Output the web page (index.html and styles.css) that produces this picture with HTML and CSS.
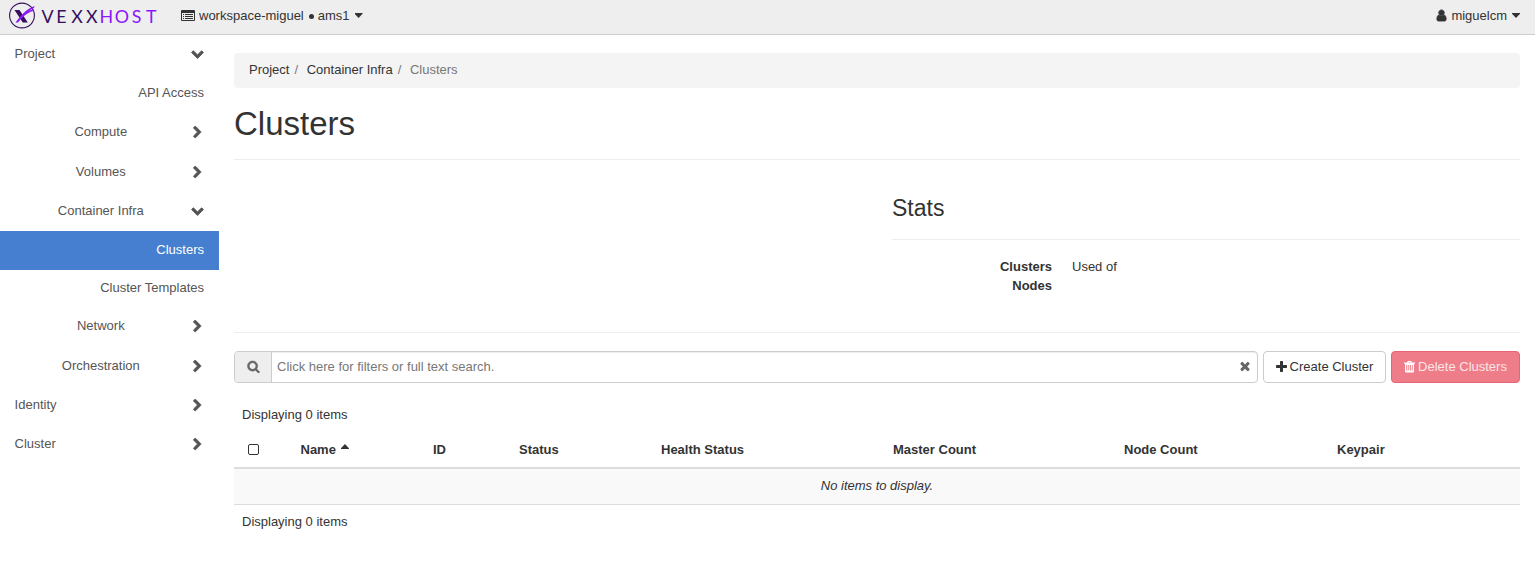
FILE: index.html
```html
<!DOCTYPE html>
<html lang="en">
<head>
<meta charset="utf-8">
<title>Clusters</title>
<link rel="stylesheet" href="styles.css">
</head>
<body>
<svg class="defs" aria-hidden="true">
  <symbol id="right" viewBox="0 0 1792 1792"><path d="M1363 877l-742 742q-19 19-45 19t-45-19l-166-166q-19-19-19-45t19-45l531-531-531-531q-19-19-19-45t19-45l166-166q19-19 45-19t45 19l742 742q19 19 19 45t-19 45z"/></symbol>
  <symbol id="down" viewBox="0 0 1792 1792"><path d="M1683 808l-742 741q-19 19-45 19t-45-19l-742-741q-19-19-19-45.500t19-45.500l166-165q19-19 45-19t45 19l531 531 531-531q19-19 45-19t45 19l166 165q19 19 19 45.500t-19 45.500z"/></symbol>
</svg>
<header class="navbar">
  <a class="brand"><svg width="150" height="30" viewBox="0 0 150 30">
    <circle cx="14" cy="15.500" r="12.400" fill="none" stroke="#35105e" stroke-width="1.100"/>
    <path d="M6.500 10h5l8.300 12.500h-5z" fill="#35105e"/>
    <path d="M7.500 22.500C12 17 17 9.500 26.500 6l-.5 1.800C18 12 14 18 10 22.500z" fill="#8b17fa"/>
    <path d="M13 18c4-4.500 8-7 13-8" stroke="#8b17fa" stroke-width="1.300" fill="none"/>
    <text class="wordmark" transform="translate(33.500 22.800) scale(1.050 1)"><tspan fill="#35105e" x="0 14 28.300 42.300">VEXX</tspan><tspan fill="#8b17fa" x="55.300 69.700 86 99.500">HOST</tspan></text>
  </svg></a>
  <a class="context"><svg class="list" width="14" height="11" viewBox="0 0 14 11"><path fill-rule="evenodd" d="M1 0h12q1 0 1 1v9q0 1-1 1H1q-1 0-1-1V1q0-1 1-1zM1 3v7h12V3z"/><path d="M2 4h1v1H2zM4 4h8v1H4zM2 6h1v1H2zM4 6h8v1H4zM2 8h1v1H2zM4 8h8v1H4z"/></svg><span>workspace-miguel</span><i class="dot"></i><span>ams1</span><i class="caret"></i></a>
  <a class="user"><svg width="13" height="13" viewBox="0 0 1792 1792"><path d="M1536 1399q0 109-62.500 187t-150.500 78h-854q-88 0-150.500-78t-62.500-187q0-85 8.500-160.500t31.500-152 58.500-131 94-89 134.500-34.500q131 128 313 128t313-128q76 0 134.500 34.500t94 89 58.500 131 31.500 152 8.500 160.500zm-256-887q0 159-112.500 271.500t-271.500 112.500-271.500-112.500-112.500-271.500 112.500-271.500 271.500-112.500 271.500 112.500 112.500 271.500z"/></svg><span>miguelcm</span><i class="caret"></i></a>
</header>
<div class="layout">
  <nav class="sidebar">
    <a class="item"><span>Project</span><svg class="open"><use href="#down"/></svg></a>
    <a class="item leaf">API Access</a>
    <a class="item group"><span>Compute</span><svg><use href="#right"/></svg></a>
    <a class="item group tall"><span>Volumes</span><svg><use href="#right"/></svg></a>
    <a class="item group"><span>Container Infra</span><svg class="open"><use href="#down"/></svg></a>
    <a class="item leaf active">Clusters</a>
    <a class="item leaf short">Cluster Templates</a>
    <a class="item group"><span>Network</span><svg><use href="#right"/></svg></a>
    <a class="item group tall"><span>Orchestration</span><svg><use href="#right"/></svg></a>
    <a class="item"><span>Identity</span><svg><use href="#right"/></svg></a>
    <a class="item"><span>Cluster</span><svg><use href="#right"/></svg></a>
  </nav>
  <main class="content">
    <ol class="breadcrumb"><li>Project</li><li>Container Infra</li><li class="current">Clusters</li></ol>
    <h1>Clusters</h1>
    <section class="stats">
      <h3>Stats</h3>
      <dl><dt>Clusters</dt><dd>Used of</dd><dt>Nodes</dt><dd></dd></dl>
    </section>
    <div class="toolbar">
      <div class="search">
        <span class="addon"><svg width="13" height="13" viewBox="0 0 1792 1792"><path d="M1216 832q0-185-131.500-316.500t-316.500-131.500-316.500 131.500-131.500 316.500 131.500 316.500 316.500 131.500 316.500-131.500 131.500-316.500zm512 832q0 52-38 90t-90 38q-54 0-90-38l-343-342q-179 124-399 124-143 0-273.500-55.500t-225-150-150-225-55.500-273.500 55.500-273.500 150-225 225-150 273.500-55.500 273.500 55.500 225 150 150 225 55.500 273.500q0 220-124 399l343 343q37 37 37 90z"/></svg></span>
        <input type="text" placeholder="Click here for filters or full text search.">
        <svg class="clear" width="14" height="14" viewBox="0 0 1792 1792"><path d="M1490 1322q0 40-28 68l-136 136q-28 28-68 28t-68-28l-294-294-294 294q-28 28-68 28t-68-28l-136-136q-28-28-28-68t28-68l294-294-294-294q-28-28-28-68t28-68l136-136q28-28 68-28t68 28l294 294 294-294q28-28 68-28t68 28l136 136q28 28 28 68t-28 68l-294 294 294 294q28 28 28 68z"/></svg>
      </div>
      <button class="btn create"><svg width="11" height="11" viewBox="192 128 1408 1408"><path d="M1600 736v192q0 40-28 68t-68 28h-416v416q0 40-28 68t-68 28h-192q-40 0-68-28t-28-68v-416h-416q-40 0-68-28t-28-68v-192q0-40 28-68t68-28h416v-416q0-40 28-68t68-28h192q40 0 68 28t28 68v416h416q40 0 68 28t28 68z"/></svg>Create Cluster</button>
      <button class="btn danger"><svg width="11" height="12" viewBox="0 0 11 12"><path fill-rule="evenodd" d="M0 1.500h3l.6-1Q3.800 0 4.300 0h2.400q.5 0 .7.500l.6 1h3v1.300h-1v7.700q0 1-1 1H2q-1 0-1-1V2.800H0zM4 1.500h3L6.500.9h-2zM2.300 4v5.500h1V4zM4.300 4v5.500h.900V4zM6 4v5.500h.900V4zM7.800 4v5.500h.900V4z"/></svg>Delete Clusters</button>
    </div>
    <table>
      <caption>Displaying 0 items</caption>
      <colgroup><col class="c-check"><col class="c-name"><col class="c-id"><col class="c-status"><col class="c-health"><col class="c-master"><col class="c-node"><col></colgroup>
      <thead><tr><th class="check"><i class="box"></i></th><th>Name<i class="sort"></i></th><th>ID</th><th>Status</th><th>Health Status</th><th>Master Count</th><th>Node Count</th><th>Keypair</th></tr></thead>
      <tbody><tr><td colspan="8">No items to display.</td></tr></tbody>
    </table>
    <p class="count">Displaying 0 items</p>
  </main>
</div>
</body>
</html>
```
FILE: styles.css
```css
* { box-sizing: border-box; }
body { margin: 0; font: 13px/19px "Liberation Sans", Arial, sans-serif; color: #333; background: #fff; overflow: hidden; }
svg { fill: currentColor; flex: none; }
.defs { display: none; }
.navbar { display: flex; align-items: flex-start; height: 35px; background: #eee; border-bottom: 1px solid #ccc; }
.brand { display: block; width: 173px; padding-left: 8px; }
.brand svg { display: block; overflow: visible; }
.wordmark { font: 400 17px Lato, sans-serif; }
.context, .user { display: flex; align-items: center; height: 31px; }
.context { padding-left: 8px; }
.context .list { margin-right: 4px; }
.dot { width: 5px; height: 5px; margin: 1px 4px 0 5px; border-radius: 50%; background: #333; }
.caret { width: 8px; height: 5px; margin-left: 5px; background: #333; clip-path: polygon(0 0, 100% 0, 100% 15%, 50% 100%, 0 15%); }
.user { margin-left: auto; padding-right: 15px; }
.user svg { margin-right: 3px; stroke: currentColor; stroke-width: 110; }
.layout { display: flex; }
.sidebar { width: 219px; color: #555; }
.item { display: flex; align-items: center; height: 39px; padding: 0 11px 2px 14.600px; }
.item span { flex: 1; }
.item svg { width: 13px; height: 13px; margin: 2px 4px 0; stroke: currentColor; stroke-width: 120; }
.item .open { margin-top: 0; }
.group span { text-align: center; }
.leaf { justify-content: flex-end; padding-right: 15px; }
.tall { height: 40px; padding-bottom: 1px; }
.short { height: 37px; }
.active { background: #467fcf; color: #fff; }
.content { flex: 1; padding: 18px 15px 0; }
.breadcrumb { display: flex; height: 35px; margin: 0; padding: 7px 15px; list-style: none; background: #f4f4f4; border-radius: 4px; }
.breadcrumb li + li::before { content: "/"; padding: 0 8.600px 0 5px; color: #777; }
.breadcrumb .current { color: #777; }
h1 { height: 72px; margin: 0; padding-top: 18px; border-bottom: 1px solid #eee; font-size: 33px; line-height: 36px; font-weight: 400; }
.stats { height: 173px; padding: 35px 0 0 658px; border-bottom: 1px solid #eee; }
h3 { height: 45px; margin: 0 0 17px; border-bottom: 1px solid #eee; font-size: 23px; line-height: 27px; font-weight: 400; }
dl { display: grid; grid-template-columns: 160px 1fr; grid-auto-rows: 19px; column-gap: 20px; margin: 0; }
dt { font-weight: 700; text-align: right; }
dd { margin: 0; }
.toolbar { display: flex; gap: 5px; height: 32px; margin-top: 18px; }
.search { display: flex; align-items: center; flex: 1; border: 1px solid #ccc; border-radius: 4px; box-shadow: inset 0 1px 1px rgba(0,0,0,.075); overflow: hidden; color: #666; }
.addon { display: flex; align-items: center; justify-content: center; width: 37px; height: 30px; padding-bottom: 1px; background: #eee; border-right: 1px solid #ccc; }
.addon svg { stroke: currentColor; stroke-width: 60; }
.search input { flex: 1; min-width: 0; padding: 0 5px 2px; border: 0; outline: 0; background: transparent; font: inherit; }
.search input::placeholder { color: #777; }
.clear { margin: 0 5px 2px 0; }
.btn { display: flex; align-items: center; justify-content: center; padding: 0 0 2px; border: 1px solid #ccc; border-radius: 4px; background: #fff; color: #333; font: inherit; }
.create { width: 123px; }
.create svg { margin: 1px 3px 0 0; }
.danger { width: 129px; background: #ee7d89; border-color: #e96375; color: #fbe5e7; }
.danger svg { margin: 2px 3px 0 0; color: #fff; }
table { width: 1286px; margin-top: 14px; border-collapse: separate; border-spacing: 0; table-layout: fixed; }
caption { height: 35px; padding: 8px; text-align: left; }
.c-check { width: 58.500px; }
.c-name { width: 132.500px; }
.c-id { width: 86px; }
.c-status { width: 142px; }
.c-health { width: 232px; }
.c-master { width: 231px; }
.c-node { width: 213px; }
th { height: 37px; padding: 0 8px; border-bottom: 2px solid #ddd; text-align: left; }
.check { padding-left: 14px; }
.box { display: block; width: 11px; height: 11px; border: 1px solid #333; border-radius: 2px; }
.sort { display: inline-block; width: 8px; height: 5px; margin: 0 0 5px 5px; background: #333; clip-path: polygon(50% 0, 100% 85%, 100% 100%, 0 100%, 0 85%); }
td { height: 36px; padding: 0 8px 2px; background: #f9f9f9; border-bottom: 1px solid #ddd; text-align: center; font-style: italic; }
.count { margin: 0; padding: 7px 8px; }
```
